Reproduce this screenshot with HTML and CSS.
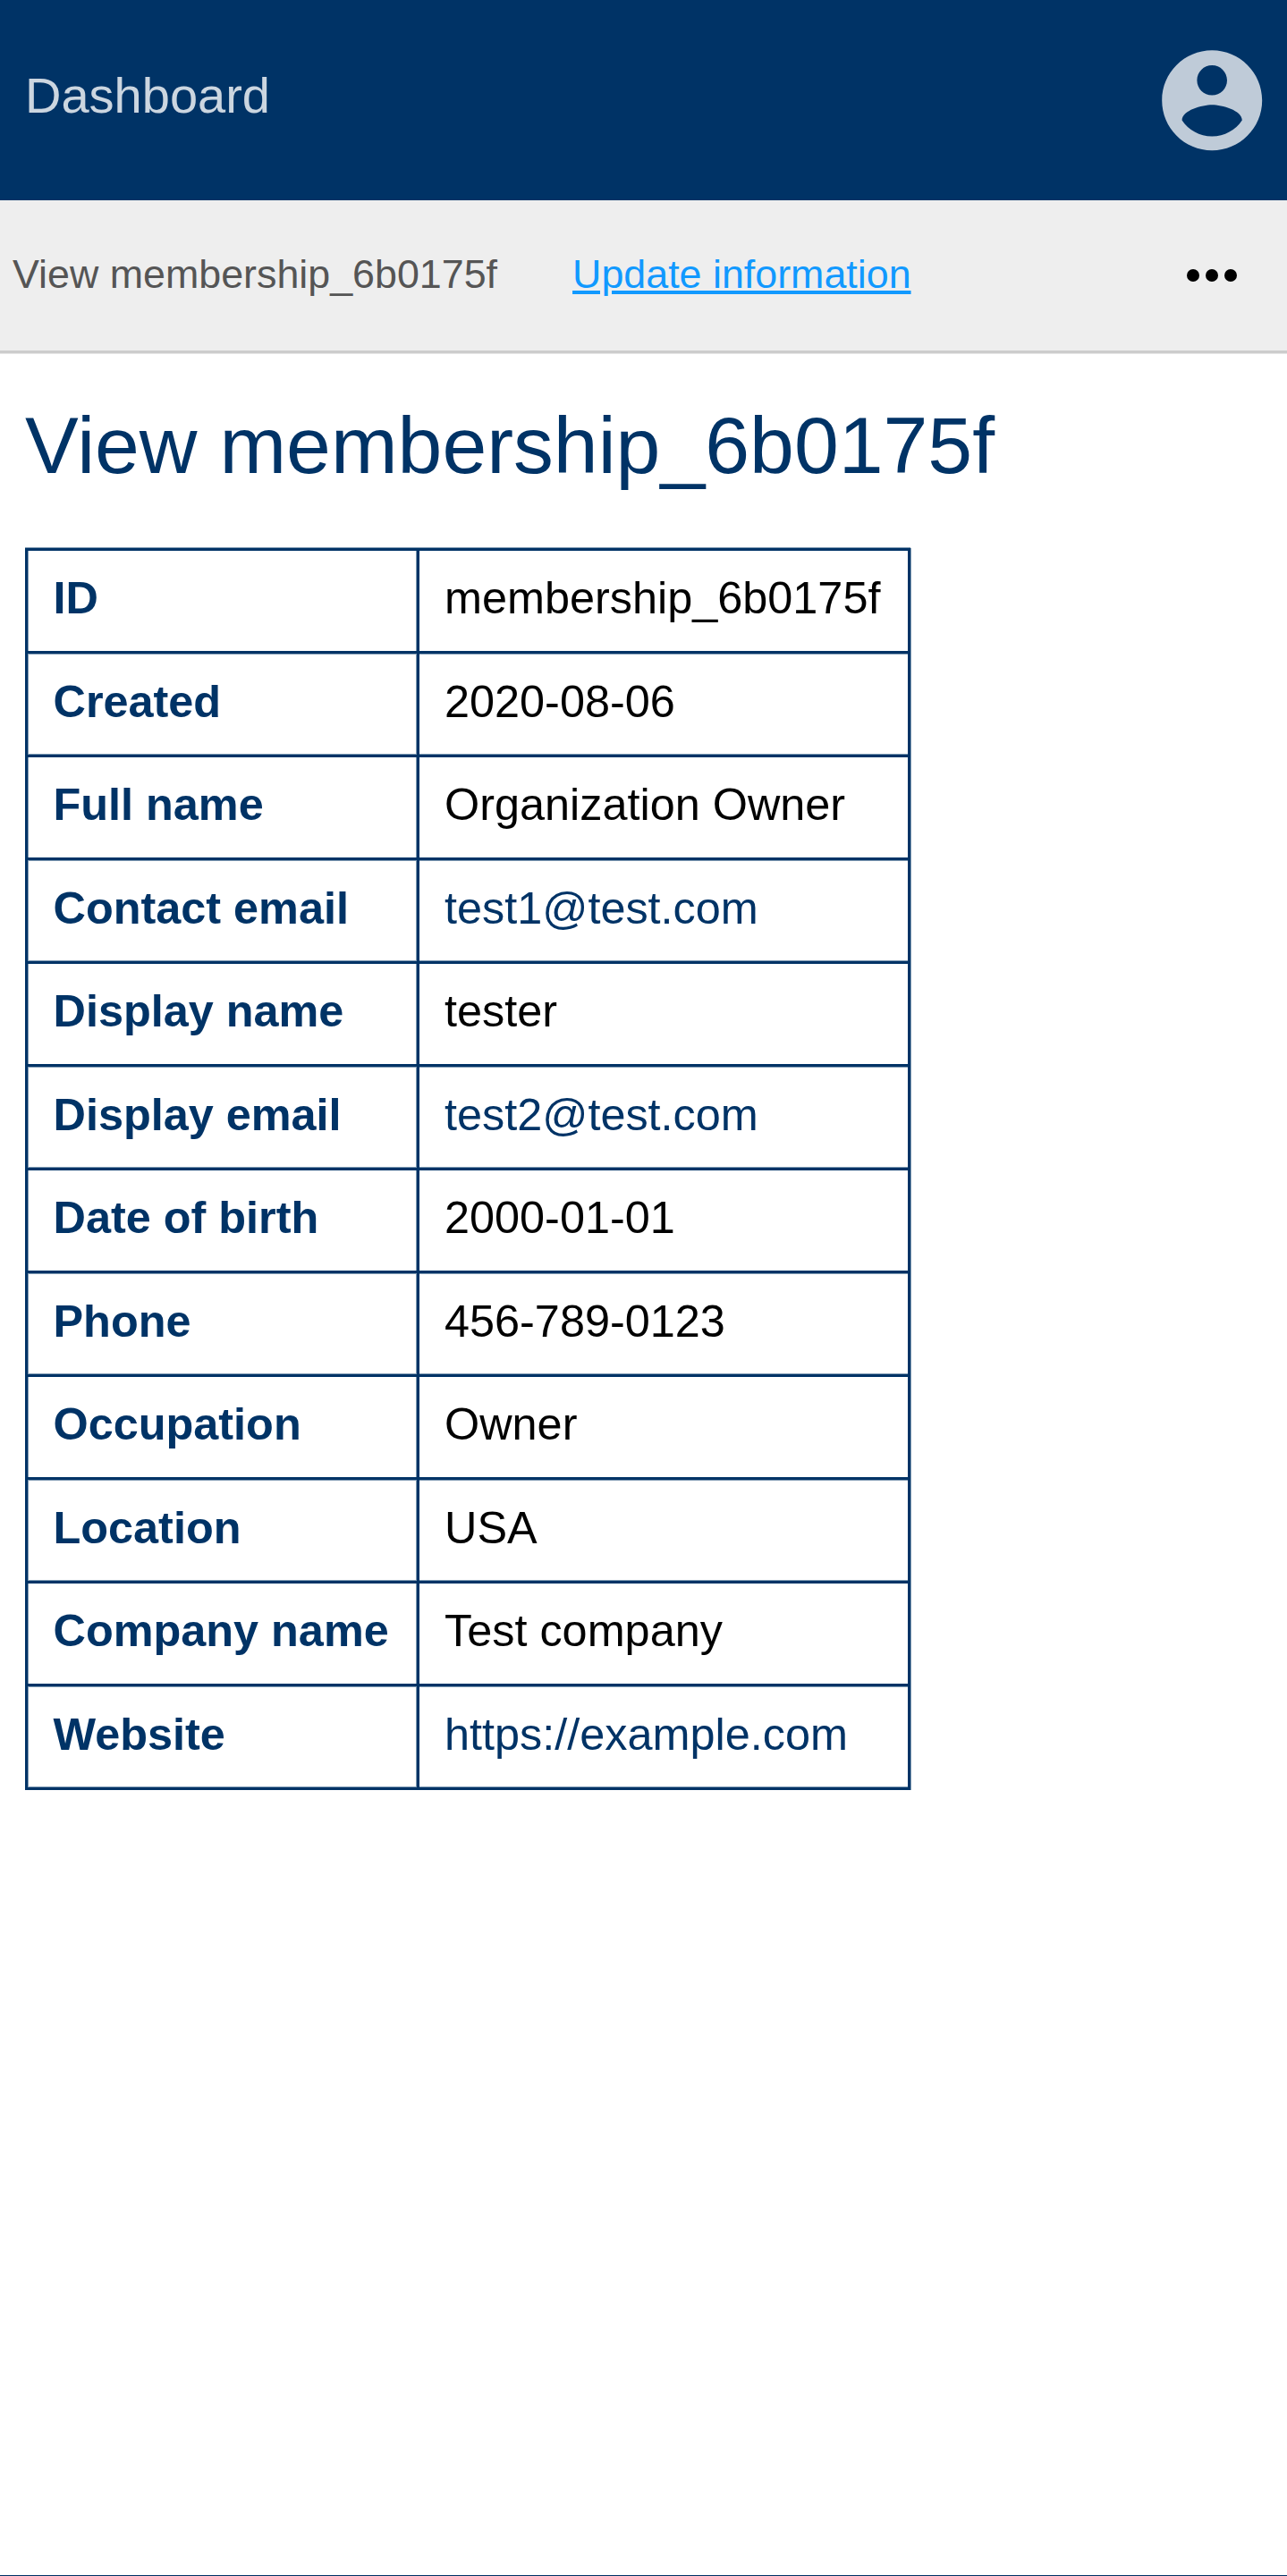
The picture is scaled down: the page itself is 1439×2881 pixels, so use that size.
FILE: index.html
```html
<!DOCTYPE html>
<html lang="en">
<head>
<meta charset="utf-8">
<title>View membership_6b0175f</title>
<link rel="stylesheet" href="styles.css">
</head>
<body>
<header class="topbar">
  <a class="brand">Dashboard</a>
  <svg class="account" viewBox="0 0 24 24" aria-label="Account"><path d="M12 2C6.48 2 2 6.48 2 12s4.48 10 10 10 10-4.48 10-10S17.52 2 12 2zm0 3c1.66 0 3 1.34 3 3s-1.34 3-3 3-3-1.34-3-3 1.34-3 3-3zm0 14.2c-2.5 0-4.71-1.28-6-3.22.03-1.99 4-3.08 6-3.08 1.99 0 5.97 1.09 6 3.08-1.29 1.94-3.5 3.22-6 3.22z"/></svg>
</header>
<nav class="subnav">
  <span class="current">View membership_6b0175f</span>
  <a class="action">Update information</a>
  <svg class="more" viewBox="0 0 24 24" aria-label="More"><circle cx="6" cy="12" r="2"/><circle cx="12" cy="12" r="2"/><circle cx="18" cy="12" r="2"/></svg>
</nav>
<main class="content">
  <h1 class="title">View membership_6b0175f</h1>
  <table class="details">
    <tr><th>ID</th><td>membership_6b0175f</td></tr>
    <tr><th>Created</th><td>2020-08-06</td></tr>
    <tr><th>Full name</th><td>Organization Owner</td></tr>
    <tr><th>Contact email</th><td><a class="link">test1@test.com</a></td></tr>
    <tr><th>Display name</th><td>tester</td></tr>
    <tr><th>Display email</th><td><a class="link">test2@test.com</a></td></tr>
    <tr><th>Date of birth</th><td>2000-01-01</td></tr>
    <tr><th>Phone</th><td>456-789-0123</td></tr>
    <tr><th>Occupation</th><td>Owner</td></tr>
    <tr><th>Location</th><td>USA</td></tr>
    <tr><th>Company name</th><td>Test company</td></tr>
    <tr><th>Website</th><td><a class="link">https://example.com</a></td></tr>
  </table>
</main>
<footer class="footer"></footer>
</body>
</html>
```
FILE: styles.css
```css
* { box-sizing: border-box; }

body {
  margin: 0;
  min-height: 2881px;
  display: flex;
  flex-direction: column;
  background: #fff;
  color: #000;
  font-family: "Liberation Sans", Arial, sans-serif;
}

.topbar {
  height: 224px;
  padding: 0 16.8px 0 28px;
  display: flex;
  align-items: center;
  justify-content: space-between;
  background: #036;
}

.brand {
  padding-bottom: 10px;
  font-size: 56px;
  line-height: 64px;
  color: rgba(255, 255, 255, 0.8);
}

.account {
  width: 134.4px;
  height: 134.4px;
  fill: rgba(255, 255, 255, 0.75);
}

.subnav {
  height: 171px;
  padding: 0 42.5px 0 14px;
  display: flex;
  align-items: center;
  background: #eee;
  border-bottom: 3px solid #ccc;
  box-shadow: 0 1px 0 #e6e6e6;
  font-size: 44.8px;
  line-height: 56px;
}

.current { color: #555; padding-bottom: 5px; }

.action {
  margin-left: 84px;
  padding-bottom: 5px;
  color: #19f;
  text-decoration: underline;
}

.more { width: 84px; height: 84px; margin-left: auto; }

.content { flex: 1; padding: 48px 28px 0; }

.title {
  margin: 0;
  height: 169.9px;
  font-size: 89.6px;
  font-weight: 400;
  line-height: 110px;
  color: #036;
}

.details {
  --edge: rgba(0, 51, 102, 0.5);
  width: 990px;
  table-layout: fixed;
  border-collapse: separate;
  border-spacing: 0;
  border: solid #036;
  border-width: 3px 0 0 3px;
  box-shadow: 0 -1px 0 var(--edge), 1px 0 0 var(--edge);
  font-size: 50.4px;
  line-height: 56px;
}

.details th,
.details td {
  height: 115.5px;
  padding: 25.5px 0 0 28px;
  border: solid #036;
  border-width: 0 3px 3px 0;
  text-align: left;
  vertical-align: top;
  white-space: nowrap;
}

.details th {
  width: 438px;
  padding-left: 28.5px;
  color: #036;
  box-shadow: inset 1px 0 0 var(--edge), inset -1px 0 0 var(--edge);
}

/* Half-pixel rules: soften the inner side of every second row */
.details tr:nth-child(even) td {
  box-shadow: inset 0 1px 0 var(--edge), inset 0 -1px 0 var(--edge);
}

.details tr:nth-child(even) th {
  box-shadow: inset 0 0 0 1px var(--edge);
}

.link { color: #036; }

.footer { height: 1px; background: #036; }
```
